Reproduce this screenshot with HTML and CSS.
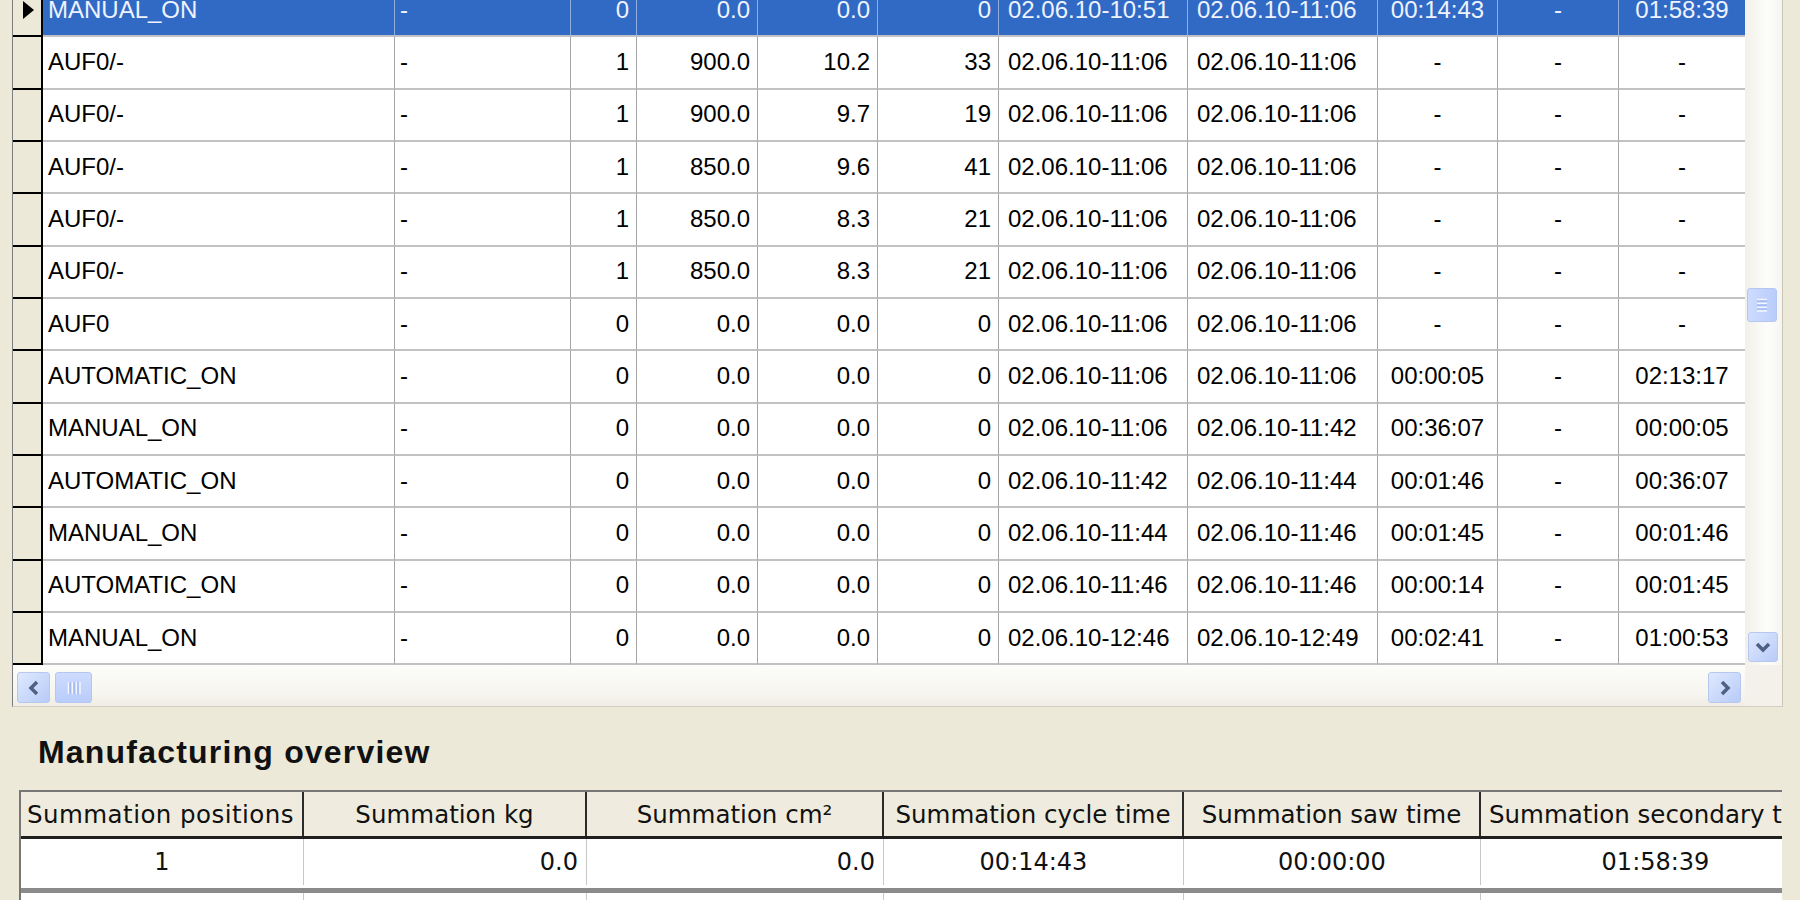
FILE: index.html
```html
<!DOCTYPE html>
<html lang="en">
<head>
<meta charset="utf-8">
<title>Manufacturing overview</title>
<link rel="stylesheet" href="styles.css">
</head>
<body>
<div class="page">
  <div class="grid-panel">
    <div class="grid-view">
      <div class="grid-rows">
        <div class="row selected">
          <div class="rh"><span class="marker"></span></div>
          <div class="c c1 l">MANUAL_ON</div><div class="c c2 l">-</div><div class="c c3 r">0</div><div class="c c4 r">0.0</div><div class="c c5 r">0.0</div><div class="c c6 r">0</div><div class="c c7 d">02.06.10-10:51</div><div class="c c8 d">02.06.10-11:06</div><div class="c c9 m">00:14:43</div><div class="c c10 m">-</div><div class="c c11 m">01:58:39</div>
        </div>
        <div class="row">
          <div class="rh"></div>
          <div class="c c1 l">AUF0/-</div><div class="c c2 l">-</div><div class="c c3 r">1</div><div class="c c4 r">900.0</div><div class="c c5 r">10.2</div><div class="c c6 r">33</div><div class="c c7 d">02.06.10-11:06</div><div class="c c8 d">02.06.10-11:06</div><div class="c c9 m">-</div><div class="c c10 m">-</div><div class="c c11 m">-</div>
        </div>
        <div class="row">
          <div class="rh"></div>
          <div class="c c1 l">AUF0/-</div><div class="c c2 l">-</div><div class="c c3 r">1</div><div class="c c4 r">900.0</div><div class="c c5 r">9.7</div><div class="c c6 r">19</div><div class="c c7 d">02.06.10-11:06</div><div class="c c8 d">02.06.10-11:06</div><div class="c c9 m">-</div><div class="c c10 m">-</div><div class="c c11 m">-</div>
        </div>
        <div class="row">
          <div class="rh"></div>
          <div class="c c1 l">AUF0/-</div><div class="c c2 l">-</div><div class="c c3 r">1</div><div class="c c4 r">850.0</div><div class="c c5 r">9.6</div><div class="c c6 r">41</div><div class="c c7 d">02.06.10-11:06</div><div class="c c8 d">02.06.10-11:06</div><div class="c c9 m">-</div><div class="c c10 m">-</div><div class="c c11 m">-</div>
        </div>
        <div class="row">
          <div class="rh"></div>
          <div class="c c1 l">AUF0/-</div><div class="c c2 l">-</div><div class="c c3 r">1</div><div class="c c4 r">850.0</div><div class="c c5 r">8.3</div><div class="c c6 r">21</div><div class="c c7 d">02.06.10-11:06</div><div class="c c8 d">02.06.10-11:06</div><div class="c c9 m">-</div><div class="c c10 m">-</div><div class="c c11 m">-</div>
        </div>
        <div class="row">
          <div class="rh"></div>
          <div class="c c1 l">AUF0/-</div><div class="c c2 l">-</div><div class="c c3 r">1</div><div class="c c4 r">850.0</div><div class="c c5 r">8.3</div><div class="c c6 r">21</div><div class="c c7 d">02.06.10-11:06</div><div class="c c8 d">02.06.10-11:06</div><div class="c c9 m">-</div><div class="c c10 m">-</div><div class="c c11 m">-</div>
        </div>
        <div class="row">
          <div class="rh"></div>
          <div class="c c1 l">AUF0</div><div class="c c2 l">-</div><div class="c c3 r">0</div><div class="c c4 r">0.0</div><div class="c c5 r">0.0</div><div class="c c6 r">0</div><div class="c c7 d">02.06.10-11:06</div><div class="c c8 d">02.06.10-11:06</div><div class="c c9 m">-</div><div class="c c10 m">-</div><div class="c c11 m">-</div>
        </div>
        <div class="row">
          <div class="rh"></div>
          <div class="c c1 l">AUTOMATIC_ON</div><div class="c c2 l">-</div><div class="c c3 r">0</div><div class="c c4 r">0.0</div><div class="c c5 r">0.0</div><div class="c c6 r">0</div><div class="c c7 d">02.06.10-11:06</div><div class="c c8 d">02.06.10-11:06</div><div class="c c9 m">00:00:05</div><div class="c c10 m">-</div><div class="c c11 m">02:13:17</div>
        </div>
        <div class="row">
          <div class="rh"></div>
          <div class="c c1 l">MANUAL_ON</div><div class="c c2 l">-</div><div class="c c3 r">0</div><div class="c c4 r">0.0</div><div class="c c5 r">0.0</div><div class="c c6 r">0</div><div class="c c7 d">02.06.10-11:06</div><div class="c c8 d">02.06.10-11:42</div><div class="c c9 m">00:36:07</div><div class="c c10 m">-</div><div class="c c11 m">00:00:05</div>
        </div>
        <div class="row">
          <div class="rh"></div>
          <div class="c c1 l">AUTOMATIC_ON</div><div class="c c2 l">-</div><div class="c c3 r">0</div><div class="c c4 r">0.0</div><div class="c c5 r">0.0</div><div class="c c6 r">0</div><div class="c c7 d">02.06.10-11:42</div><div class="c c8 d">02.06.10-11:44</div><div class="c c9 m">00:01:46</div><div class="c c10 m">-</div><div class="c c11 m">00:36:07</div>
        </div>
        <div class="row">
          <div class="rh"></div>
          <div class="c c1 l">MANUAL_ON</div><div class="c c2 l">-</div><div class="c c3 r">0</div><div class="c c4 r">0.0</div><div class="c c5 r">0.0</div><div class="c c6 r">0</div><div class="c c7 d">02.06.10-11:44</div><div class="c c8 d">02.06.10-11:46</div><div class="c c9 m">00:01:45</div><div class="c c10 m">-</div><div class="c c11 m">00:01:46</div>
        </div>
        <div class="row">
          <div class="rh"></div>
          <div class="c c1 l">AUTOMATIC_ON</div><div class="c c2 l">-</div><div class="c c3 r">0</div><div class="c c4 r">0.0</div><div class="c c5 r">0.0</div><div class="c c6 r">0</div><div class="c c7 d">02.06.10-11:46</div><div class="c c8 d">02.06.10-11:46</div><div class="c c9 m">00:00:14</div><div class="c c10 m">-</div><div class="c c11 m">00:01:45</div>
        </div>
        <div class="row">
          <div class="rh"></div>
          <div class="c c1 l">MANUAL_ON</div><div class="c c2 l">-</div><div class="c c3 r">0</div><div class="c c4 r">0.0</div><div class="c c5 r">0.0</div><div class="c c6 r">0</div><div class="c c7 d">02.06.10-12:46</div><div class="c c8 d">02.06.10-12:49</div><div class="c c9 m">00:02:41</div><div class="c c10 m">-</div><div class="c c11 m">01:00:53</div>
        </div>
      </div>
    </div>
    <div class="vscroll">
      <div class="vthumb">
        <svg width="12" height="14" viewBox="0 0 12 14"><g stroke="#f4f7ff" stroke-width="1.5"><line x1="1" y1="1.5" x2="11" y2="1.5"/><line x1="1" y1="5.5" x2="11" y2="5.5"/><line x1="1" y1="9.5" x2="11" y2="9.5"/><line x1="1" y1="13" x2="11" y2="13"/></g><g stroke="#8eaaf0" stroke-width="1"><line x1="1" y1="3" x2="11" y2="3"/><line x1="1" y1="7" x2="11" y2="7"/><line x1="1" y1="11" x2="11" y2="11"/></g></svg>
      </div>
      <div class="sbtn sbtn-down">
        <svg width="20" height="20" viewBox="0 0 20 20"><polyline points="4,7 10,13 16,7" fill="none" stroke="#4d6185" stroke-width="3.5"/></svg>
      </div>
    </div>
    <div class="hscroll">
      <div class="sbtn sbtn-h">
        <svg width="20" height="20" viewBox="0 0 20 20"><polyline points="13,4 7,10 13,16" fill="none" stroke="#4d6185" stroke-width="3.5"/></svg>
      </div>
      <div class="hthumb">
        <svg width="14" height="14" viewBox="0 0 14 14"><g stroke="#f4f7ff" stroke-width="1.5"><line x1="1.5" y1="1" x2="1.5" y2="13"/><line x1="5.5" y1="1" x2="5.5" y2="13"/><line x1="9.5" y1="1" x2="9.5" y2="13"/><line x1="13" y1="1" x2="13" y2="13"/></g><g stroke="#8eaaf0" stroke-width="1"><line x1="3" y1="1" x2="3" y2="13"/><line x1="7" y1="1" x2="7" y2="13"/><line x1="11" y1="1" x2="11" y2="13"/></g></svg>
      </div>
      <div class="sbtn sbtn-h sbtn-right">
        <svg width="20" height="20" viewBox="0 0 20 20"><polyline points="7,4 13,10 7,16" fill="none" stroke="#4d6185" stroke-width="3.5"/></svg>
      </div>
    </div>
    <div class="corner"></div>
  </div>

  <h2 class="title">Manufacturing overview</h2>

  <div class="summary">
    <div class="sum-row sum-head">
      <div class="sc sc-first">Summation positions</div>
      <div class="sc">Summation kg</div>
      <div class="sc">Summation cm²</div>
      <div class="sc">Summation cycle time</div>
      <div class="sc">Summation saw time</div>
      <div class="sc sc-last">Summation secondary time</div>
    </div>
    <div class="sum-row sum-data">
      <div class="sc">1</div>
      <div class="sc sr">0.0</div>
      <div class="sc sr">0.0</div>
      <div class="sc">00:14:43</div>
      <div class="sc">00:00:00</div>
      <div class="sc">01:58:39</div>
    </div>
    <div class="sum-row sum-next">
      <div class="sc"></div>
      <div class="sc"></div>
      <div class="sc"></div>
      <div class="sc"></div>
      <div class="sc"></div>
      <div class="sc"></div>
    </div>
  </div>
</div>
</body>
</html>
```
FILE: styles.css
```css
html, body {
  margin: 0;
  padding: 0;
  height: 900px;
  overflow: hidden;
}
body {
  background: #ece9d8;
  font-family: "Liberation Sans", Arial, sans-serif;
  color: #000;
}
.page {
  display: flex;
  flex-direction: column;
}

/* ---------- data grid panel ---------- */
.grid-panel {
  margin-left: 12px;
  width: 1771px;
  display: grid;
  grid-template-columns: 1732px 37px;
  grid-template-rows: 665px 41px;
  border-left: 1px solid #7d7d7d;
  border-right: 1px solid #c9c6b8;
  border-bottom: 1px solid #d2cfc2;
  box-sizing: border-box;
  height: 707px;
}
.grid-view {
  overflow: hidden;
  background: #fff;
}
.grid-rows {
  margin-top: -15px;
  display: flex;
  flex-direction: column;
}
.row {
  display: flex;
  height: 52.33px;
  flex: none;
}
.rh {
  width: 30px;
  flex: none;
  box-sizing: border-box;
  background: #ece9d8;
  border-right: 2px solid #000;
  border-bottom: 2px solid #000;
  display: flex;
  align-items: center;
  justify-content: center;
}
.marker {
  width: 0;
  height: 0;
  border-left: 11px solid #000;
  border-top: 9px solid transparent;
  border-bottom: 9px solid transparent;
  margin-left: 2px;
}
.c {
  box-sizing: border-box;
  flex: none;
  border-right: 1px solid #a4a4a4;
  border-bottom: 2px solid #c2c2c2;
  display: flex;
  align-items: center;
  font-size: 24px;
  white-space: nowrap;
  overflow: hidden;
  padding: 0 6px 1px 6px;
}
.c1 { width: 352px; }
.c2 { width: 176px; }
.c3 { width: 66px; }
.c4 { width: 121px; }
.c5 { width: 120px; }
.c6 { width: 121px; }
.c7 { width: 189px; }
.c8 { width: 190px; }
.c9 { width: 120px; }
.c10 { width: 121px; }
.c11 { flex: 1; border-right: none; }
.l { justify-content: flex-start; padding-left: 5px; }
.r { justify-content: flex-end; padding-right: 7px; }
.d { justify-content: flex-start; padding-left: 9px; }
.m { justify-content: center; }

.selected .c {
  background: #316ac5;
  color: #eef3ff;
  border-right-color: #93afe0;
}

/* ---------- scrollbars ---------- */
.vscroll {
  background: linear-gradient(to right, #f1f0e9, #fdfdfb 60%, #f6f5f0);
  display: flex;
  flex-direction: column;
  align-items: flex-start;
  padding-left: 2px;
}
.vthumb {
  margin-top: 288px;
  width: 30px;
  height: 34px;
  box-sizing: border-box;
  border: 1px solid #b4c6f2;
  border-radius: 3px;
  background: linear-gradient(to right, #cddbfe, #b9cdfb);
  display: flex;
  align-items: center;
  justify-content: center;
}
.sbtn {
  width: 30px;
  height: 30px;
  box-sizing: border-box;
  border: 1px solid #b7c8f0;
  border-radius: 3px;
  background: linear-gradient(135deg, #dfe9fe, #b8cbf8);
  display: flex;
  align-items: center;
  justify-content: center;
  flex: none;
}
.sbtn-down {
  margin-top: auto;
  margin-bottom: 3px;
  margin-left: 1px;
}
.hscroll {
  background: linear-gradient(to bottom, #fdfdfb, #f6f5ef 70%, #efede4);
  display: flex;
  align-items: flex-start;
  padding: 7px 4px 0 4px;
}
.sbtn-h {
  width: 33px;
  height: 31px;
}
.hthumb {
  margin-left: 5px;
  width: 37px;
  height: 31px;
  box-sizing: border-box;
  border: 1px solid #b4c6f2;
  border-radius: 3px;
  background: linear-gradient(to bottom, #cddbfe, #b9cdfb);
  display: flex;
  align-items: center;
  justify-content: center;
}
.sbtn-right {
  margin-left: auto;
}
.corner {
  background: #f3f1ea;
}

/* ---------- summary ---------- */
.title {
  margin: 27px 0 0 38px;
  font-size: 32px;
  line-height: 36px;
  font-weight: bold;
  letter-spacing: 1.2px;
  color: #111;
}
.summary {
  margin: 20px 0 0 19px;
  width: 1763px;
  overflow: hidden;
  border-top: 2px solid #777;
  border-left: 2px solid #777;
  box-sizing: border-box;
  font-family: "DejaVu Sans", Verdana, sans-serif;
}
.sum-row {
  display: grid;
  grid-template-columns: 283px 283px 297px 300px 297px 350px;
  width: 1810px;
}
.sc {
  box-sizing: border-box;
  display: flex;
  align-items: center;
  justify-content: center;
  white-space: nowrap;
  overflow: hidden;
}
.sum-head {
  height: 47px;
  background: #efecdf;
  border-bottom: 3px solid #1f1f1f;
  box-sizing: border-box;
}
.sum-head .sc {
  border-right: 2px solid #2b2b2b;
  font-size: 24.5px;
  color: #111;
}
.sum-head .sc-first {
  justify-content: flex-start;
  padding-left: 6px;
  letter-spacing: 0.45px;
}
.sum-head .sc-last {
  justify-content: flex-start;
  padding-left: 8px;
}
.sum-data {
  height: 49px;
  background: #fff;
  padding-bottom: 3px;
  box-sizing: border-box;
}
.sum-data .sc {
  border-right: 1px solid #c8c8c8;
  font-size: 24px;
  color: #111;
}
.sum-data .sr {
  justify-content: flex-end;
  padding-right: 8px;
}
.sum-next {
  height: 40px;
  background: #fff;
  border-top: 5px solid #8b8b8b;
  box-sizing: border-box;
}
.sum-next .sc {
  border-right: 1px solid #c8c8c8;
}
```
